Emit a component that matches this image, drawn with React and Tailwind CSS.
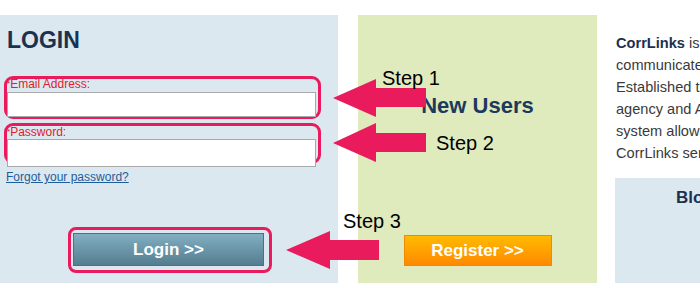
import React from 'react';

const pink = '#e91b5d';

const Arrows = () => (
  <svg className="absolute left-0 top-0 pointer-events-none" width="700" height="299" viewBox="0 0 700 299">
    <polygon fill={pink} points="333,98 376,79 376,88 426,88 426,107 376,107 376,117" />
    <polygon fill={pink} points="333,143 376,123 376,133 426,133 426,152 376,152 376,162" />
    <polygon fill={pink} points="286,250 330,231 330,240 379,240 379,260 330,260 330,269" />
  </svg>
);

const StepLabel = ({ className, children }) => (
  <div className={`absolute text-[20px] leading-[20px] text-black whitespace-nowrap ${className}`}>{children}</div>
);

const App = () => {
  return (
    <div className="relative w-[700px] h-[299px] bg-white overflow-hidden font-['Liberation_Sans',Arial,sans-serif]">
      <div className="flex pt-[15px]">
        {/* login box */}
        <div className="w-[338px] h-[268px] bg-[#dce8ef] shrink-0 flex flex-col">
          <h1 className="pt-[12px] pl-[7px] text-[23px] leading-[26px] font-bold text-[#1b3150]">LOGIN</h1>

          <div className="mt-[23px] ml-[4px] w-[317px] h-[43px] border-[3px] border-[#e91b5d] rounded-[9px]">
            <div className="-mt-[1px] h-[14px] text-[12px] leading-[12px] text-[#e0202a] whitespace-nowrap">
              <span className="text-[8px] align-top">*</span>Email Address:
            </div>
            <div className="w-[309px] h-[25px] bg-white border border-[#a9a9a9]" />
          </div>

          <div className="mt-[4px] ml-[4px] w-[317px] h-[41px] border-[3px] border-[#e91b5d] rounded-[9px]">
            <div className="h-[13px] text-[12px] leading-[12px] text-[#e0202a] whitespace-nowrap">
              <span className="text-[8px] align-top">*</span>Password:
            </div>
            <div className="w-[309px] h-[28px] bg-white border border-[#a9a9a9]" />
          </div>

          <a href="#" className="mt-[6px] ml-[6px] text-[12px] leading-[14px] text-[#1d5d9c] underline whitespace-nowrap self-start">
            Forgot your password?
          </a>

          <div className="mt-[43px] ml-[68px] w-[204px] h-[46px] border-[3px] border-[#e91b5d] rounded-[8px]">
            <button className="ml-[2px] mt-[3px] w-[191px] h-[33px] bg-gradient-to-b from-[#82afc3] to-[#557d90] border border-[#4a7284] text-white font-bold text-[17px] leading-[20px]">
              Login &gt;&gt;
            </button>
          </div>
        </div>

        {/* new users */}
        <div className="ml-[20px] w-[239px] h-[268px] bg-[#dfeabd] shrink-0 flex flex-col items-center">
          <h2 className="pt-[78px] text-[22px] leading-[26px] font-bold text-[#1b3a5c]">New Users</h2>
          <button className="mt-[116px] w-[148px] h-[31px] bg-gradient-to-b from-[#ffbb00] to-[#ff8800] border border-[#f08a00] text-white font-bold text-[17px] leading-[20px]">
            Register &gt;&gt;
          </button>
        </div>

        {/* about */}
        <div className="ml-[18px] flex-1 min-w-0">
          <div className="pt-[17px] pl-[1px] text-[14.6px] leading-[22px] text-[#3a3a3a] whitespace-nowrap">
            <div><b className="text-[#1b3150]">CorrLinks</b> is a secure email service</div>
            <div>communicate with inmates</div>
            <div>Established through a</div>
            <div>agency and Advanced</div>
            <div>system allows approved</div>
            <div>CorrLinks service</div>
          </div>
          <div className="mt-[14px] h-[105px] bg-[#dce8ef] pl-[61px] pt-[10px]">
            <div className="text-[17px] leading-[20px] font-bold text-[#1b3150] whitespace-nowrap">Blog</div>
          </div>
        </div>
      </div>

      <Arrows />
      <StepLabel className="left-[382px] top-[68px]">Step 1</StepLabel>
      <StepLabel className="left-[436px] top-[133px]">Step 2</StepLabel>
      <StepLabel className="left-[343px] top-[211px]">Step 3</StepLabel>
    </div>
  );
};

export default App;
